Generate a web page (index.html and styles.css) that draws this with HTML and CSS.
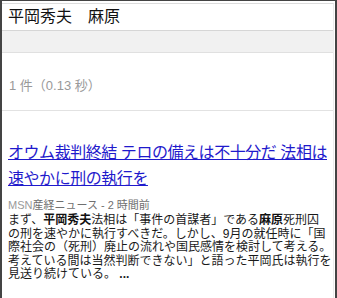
FILE: index.html
```html
<!DOCTYPE html>
<html lang="ja">
<head>
<meta charset="utf-8">
<link rel="stylesheet" href="styles.css">
</head>
<body>
<div class="frame">
  <div class="inner">
    <div class="query">平岡秀夫　麻原</div>
    <div class="band"></div>
    <div class="stats">1 件（0.13 秒）</div>
    <div class="result">
      <a class="title" href="#">オウム裁判終結 テロの備えは不十分だ 法相は<br>速やかに刑の執行を</a>
      <div class="source"><span class="msn">MSN</span>産経ニュース - 2 時間前</div>
      <div class="snippet">まず、<b>平岡秀夫</b>法相は「事件の首謀者」である<b>麻原</b>死刑囚<br>の刑を速やかに執行すべきだ。しかし、9月の就任時に「国<br>際社会の（死刑）廃止の流れや国民感情を検討して考える。<br>考えている間は当然判断できない」と語った平岡氏は執行を<br>見送り続けている。 <b class="more">...</b></div>
    </div>
  </div>
</div>
</body>
</html>
```

FILE: styles.css
```css
html, body {
  margin: 0;
  padding: 0;
  background: #fff;
}
body {
  font-family: "Liberation Sans", "Noto Sans CJK JP", sans-serif;
  color: #222;
}
.frame {
  box-sizing: border-box;
  width: 337px;
  height: 298px;
  border-top: 1px solid #444;
  border-left: 2px solid #444;
  border-right: 2px solid #444;
  overflow: hidden;
}
.inner {
  margin-top: 2px;
  margin-right: 1px;
  border-top: 1px solid #dcdcdc;
  border-right: 1px solid #ececec;
  height: 100%;
}
.query {
  height: 26px;
  padding-left: 6px;
  font-size: 16px;
  line-height: 26px;
  color: #111;
  border-bottom: 1px solid #d6d6d6;
}
.band {
  height: 21px;
  background: #f1f1f1;
  border-bottom: 1px solid #e0e0e0;
}
.stats {
  box-sizing: border-box;
  height: 58px;
  padding: 24px 0 0 7px;
  font-size: 13px;
  line-height: 18px;
  color: #999;
  border-bottom: 1px solid #e2e2e2;
}
.result {
  padding: 29px 0 0 6px;
}
.title {
  display: block;
  font-size: 16px;
  line-height: 26px;
  letter-spacing: -0.45px;
  color: #1f1acc;
  text-decoration: underline;
  white-space: nowrap;
}
.source {
  margin-top: 6px;
  font-size: 11px;
  line-height: 14px;
  color: #6f6f6f;
}
.msn {
  color: #9a9a9a;
}
.snippet {
  margin-top: 2px;
  font-size: 12px;
  line-height: 13.6px;
  color: #1a1a1a;
  white-space: nowrap;
}
.snippet b {
  font-weight: bold;
  color: #111;
}
.snippet .more {
  color: #222;
}
```
